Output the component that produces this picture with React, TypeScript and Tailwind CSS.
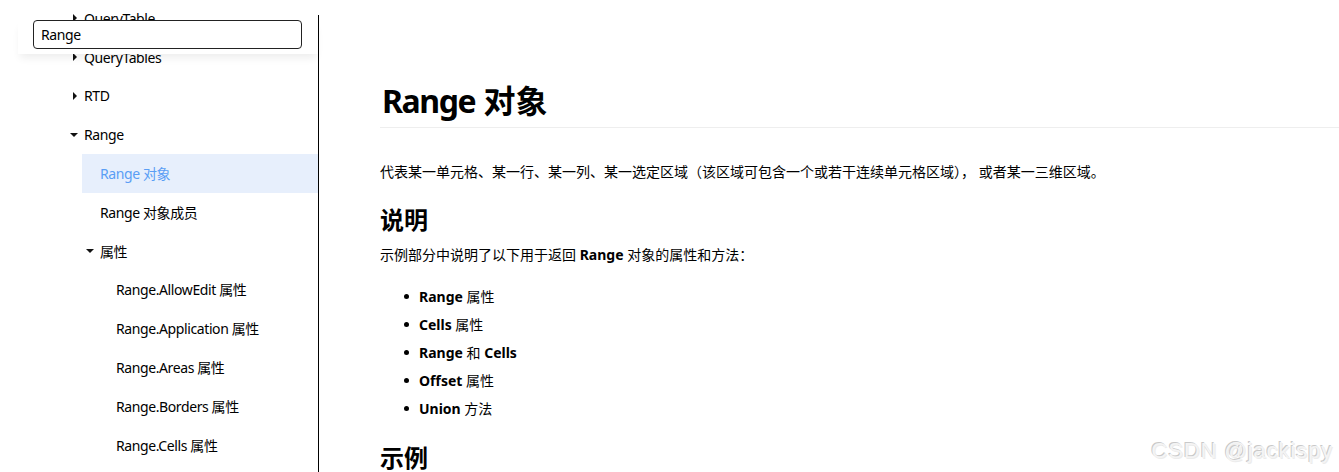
import React from "react";

type Item = { label: string; level: 1 | 2 | 3; arrow?: "right" | "down"; selected?: boolean };

const items: Item[] = [
  { label: "QueryTable", level: 1, arrow: "right" },
  { label: "QueryTables", level: 1, arrow: "right" },
  { label: "RTD", level: 1, arrow: "right" },
  { label: "Range", level: 1, arrow: "down" },
  { label: "Range 对象", level: 2, selected: true },
  { label: "Range 对象成员", level: 2 },
  { label: "属性", level: 2, arrow: "down" },
  { label: "Range.AllowEdit 属性", level: 3 },
  { label: "Range.Application 属性", level: 3 },
  { label: "Range.Areas 属性", level: 3 },
  { label: "Range.Borders 属性", level: 3 },
  { label: "Range.Cells 属性", level: 3 },
];

const levelClass: Record<number, string> = {
  1: "ml-[66px]",
  2: "ml-[82px]",
  3: "ml-[98px]",
};

function Arrow({ dir }: { dir: "right" | "down" }) {
  return (
    <svg width="8" height="8" viewBox="0 0 8 8" className="block">
      {dir === "down" ? (
        <polygon points="0,2 8,2 4,6" fill="#111" />
      ) : (
        <polygon points="3,0 7,4 3,8" fill="#111" />
      )}
    </svg>
  );
}

const font = "font-['Segoe_UI','Noto_Sans','Noto_Sans_CJK_SC',sans-serif]";

export default function App() {
  return (
    <div className={`relative flex h-[472px] w-[1339px] overflow-hidden bg-white text-black ${font}`}>
      {/* Sidebar */}
      <aside className="relative w-[319px] shrink-0">
        <div className="mt-[15px] flow-root h-[457px] border-r border-black">
          <ul className="-mt-[16px] text-[14px] tracking-[-0.4px]">
            {items.map((it, i) => (
              <li
                key={i}
                className={`flex h-[38.8px] items-center ${levelClass[it.level]} ${
                  it.selected ? "bg-[#e7effc] text-[#5a9ef5]" : ""
                }`}
              >
                <span className="flex w-[18px] shrink-0 pl-[4px]">
                  {it.arrow ? <Arrow dir={it.arrow} /> : null}
                </span>
                <span className="whitespace-nowrap">{it.label}</span>
              </li>
            ))}
          </ul>
        </div>
        {/* Search panel overlay */}
        <div className="absolute left-[18px] top-[20px] h-[34px] w-[300px] bg-white shadow-[0_6px_8px_-2px_rgba(0,0,0,0.07)]">
          <div className="ml-[15px] flex h-[29px] w-[269px] items-center rounded-[4px] border border-[#222] bg-white pl-[7px] text-[14px] tracking-[-0.4px]">
            Range
          </div>
        </div>
      </aside>

      {/* Main content */}
      <main className="flex-1 pl-[61px] pt-[81px]">
        <h1 className="border-b border-[#eeeeee] pb-[6px] text-[32px] font-bold leading-[40px]">
          <span className="ml-[2px] tracking-[-1.4px]">Range</span> 对象
        </h1>
        <p className="mt-[33px] text-[14px] leading-[22px]">
          代表某一单元格、某一行、某一列、某一选定区域（该区域可包含一个或若干连续单元格区域）， 或者某一三维区域。
        </p>
        <h2 className="mt-[21px] text-[24px] font-bold leading-[32px]">说明</h2>
        <p className="mt-[8px] text-[14px] leading-[22px]">
          示例部分中说明了以下用于返回 <b>Range</b> 对象的属性和方法：
        </p>
        <ul className="mt-[16px] pl-[24px] text-[14px]">
          {[
            ["Range", " 属性"],
            ["Cells", " 属性"],
            ["Range", " 和 ", "Cells"],
            ["Offset", " 属性"],
            ["Union", " 方法"],
          ].map((parts, i) => (
            <li key={i} className="flex h-[28px] items-center">
              <span className="mr-[10px] block h-[5px] w-[5px] rounded-full bg-black" />
              <span className="whitespace-pre">
                <b>{parts[0]}</b>
                {parts[1]}
                {parts[2] ? <b>{parts[2]}</b> : null}
              </span>
            </li>
          ))}
        </ul>
        <h2 className="mt-[20px] text-[24px] font-bold leading-[32px]">示例</h2>
      </main>

      {/* Watermark */}
      <div className="absolute bottom-[8px] right-[6px] font-['Liberation_Sans',Arial,sans-serif] text-[22px] leading-[26px] tracking-[0.9px] text-[#f4f4f4] [text-shadow:-1px_-1px_0_#c9c9c9,1px_1px_0_#ececec]">
        CSDN @jackispy
      </div>
    </div>
  );
}
